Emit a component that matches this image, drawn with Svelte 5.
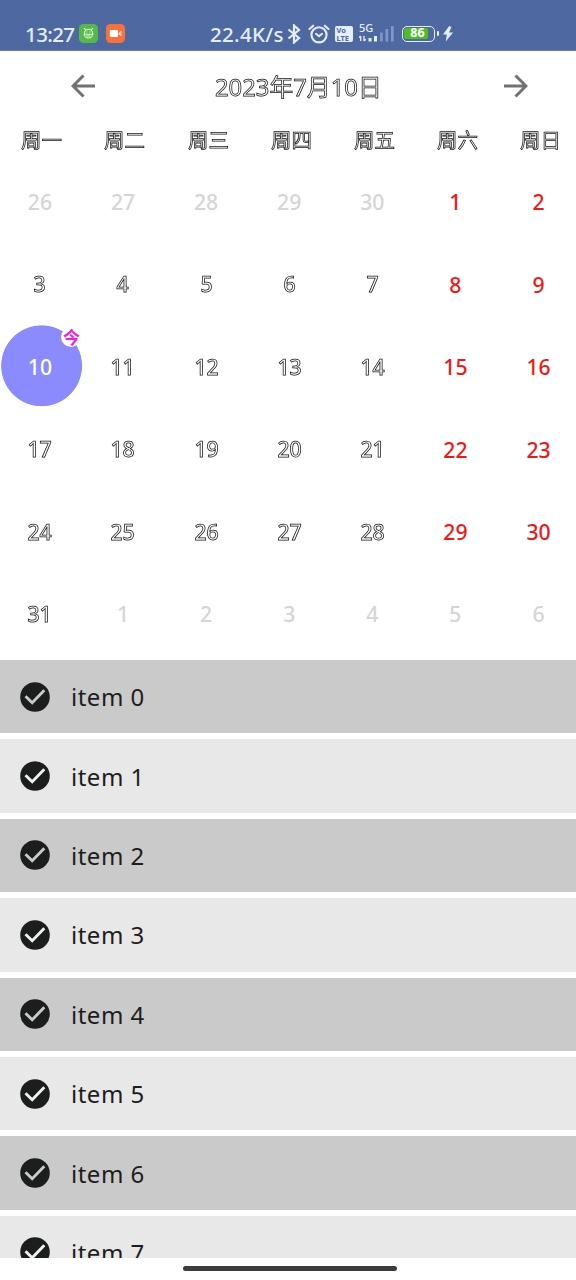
<script>
  const weekdays = ['周一', '周二', '周三', '周四', '周五', '周六', '周日'];
  const days = [];
  for (let i = 0; i < 42; i++) {
    const n = i < 5 ? 26 + i : i < 36 ? i - 4 : i - 35;
    const other = i < 5 || i > 35;
    days.push({ n, other, rest: !other && i % 7 > 4, today: i === 14 });
  }
  const items = Array.from({ length: 8 }, (_, i) => `item ${i}`);
</script>

<div class="screen">
  <header class="status">
    <span class="time">13:27</span>
    <svg class="app" width="19" height="19" viewBox="0 0 19 19">
      <rect width="19" height="19" rx="4.5" fill="#55b947" />
      <g fill="none" stroke="#e4f8df" stroke-width="1.1">
        <rect x="5.5" y="5.5" width="8" height="8.5" rx="3.6" />
        <path d="M6.5 6 5.4 4M12.5 6l1.1-2M4.5 10.3h10M7.5 8h1M10.5 8h1M7.5 12h4" />
      </g>
    </svg>
    <svg class="app cam" width="19" height="19" viewBox="0 0 19 19">
      <rect width="19" height="19" rx="4.5" fill="#f9703a" />
      <rect x="3.8" y="6" width="8.2" height="7" rx="1" fill="#fff" />
      <path d="M12.5 9 15.5 6.5v6L12.5 10.5z" fill="#ffd3c0" />
    </svg>
    <span class="speed">22.4K/s</span>
    <svg class="bt" width="14" height="20" viewBox="0 0 14 20">
      <path d="M1.5 5.5 12 14 7 18.5v-17L12 6 1.5 14.5" fill="none" stroke="#e7edfb" stroke-width="2.2" />
    </svg>
    <svg class="alarm" width="22" height="20" viewBox="0 0 22 20">
      <g fill="none" stroke="#e7edfb" stroke-width="2.1" stroke-linecap="round">
        <circle cx="11" cy="10.8" r="7.6" />
        <path d="M1.5 5 5.2 1.7M20.5 5l-3.7-3.3M8 9.8l3 2.4 3-2.4" />
      </g>
    </svg>
    <span class="volte"><b>Vo</b><b>LTE</b></span>
    <div class="signal">
      <span>5G</span>
      <svg width="36" height="19" viewBox="0 0 36 19">
        <path d="M1.7 12v5M0 13.8 1.7 12M5 12v5M6.7 15.2 5 17" stroke="#e7edfb" stroke-width="1.3" fill="none" />
        <path d="M9.5 14h3v3.5h-3zM15 12h3v5.5h-3z" fill="#e7edfb" />
        <path d="M21 8.5h2.7v9H21zM26.5 5h2.7v12.5h-2.7zM32 2h2.7v15.5H32z" fill="#8295c7" />
      </svg>
    </div>
    <span class="battery"><i>86</i></span>
    <svg class="bolt" width="10" height="16" viewBox="0 0 10 16">
      <path d="M6.2 0 0 8.4h3.8L2.8 15.5 10 6.6H6L8.5 1z" fill="#e7edfb" />
    </svg>
  </header>

  <nav class="titlebar">
    <svg width="24" height="24" viewBox="0 0 24 24"><path d="M24 12H2M12.5 1.5 2 12l10.5 10.5" /></svg>
    <h1 class="outlined">2023年7月10日</h1>
    <svg width="24" height="24" viewBox="0 0 24 24"><path d="M0 12h22M11.5 1.5 22 12 11.5 22.5" /></svg>
  </nav>

  <div class="grid week">
    {#each weekdays as d}<span class="outlined">{d}</span>{/each}
  </div>
  <div class="grid month">
    {#each days as d}
      <div class="day" class:other={d.other} class:rest={d.rest} class:today={d.today}
        class:outlined={!d.other && !d.rest && !d.today}>
        <span>{d.n}</span>
        {#if d.today}<em>今</em>{/if}
      </div>
    {/each}
  </div>

  <ul>
    {#each items as item}
      <li>
        <svg width="30" height="30" viewBox="0 0 30 30">
          <circle cx="15" cy="15" r="14.8" fill="#1c1e1e" />
          <path d="M5.5 14.2 12.2 20.8 24.3 8.3" />
        </svg>
        <span>{item}</span>
      </li>
    {/each}
  </ul>
  <footer><div></div></footer>
</div>

<style>
  :global(body) { margin: 0; }
  .screen {
    width: 576px; height: 1280px; overflow: hidden; background: #fff;
    display: flex; flex-direction: column;
    font-family: "Noto Sans", "Noto Sans CJK SC", sans-serif;
  }
  .status {
    height: 51px; box-sizing: border-box; padding: 17px 0 0 25px; flex: none;
    display: flex; align-items: center; background: #4e68a2; color: #e7edfb;
    border-bottom: 1px solid #647cb4; font-size: 20.5px; font-weight: 500; line-height: 30px;
  }
  .time { width: 54px; letter-spacing: -.6px; white-space: nowrap; }
  .cam { margin-left: 7.5px; }
  .speed { margin-left: 85.5px; width: 76px; letter-spacing: .3px; white-space: nowrap; }
  .bt { margin-left: 1px; }
  .alarm { margin-left: 7px; }
  .volte {
    width: 18px; height: 16px; margin-left: 5px; border-radius: 2px; background: #e7edfb; color: #4e68a2;
    display: flex; flex-direction: column; font-size: 7.5px; line-height: 8px; padding-left: 1.5px; box-sizing: border-box;
  }
  .signal { display: grid; margin-left: 6px; width: 36px; height: 20px; }
  .signal > * { grid-area: 1 / 1; }
  .signal span { font-size: 11px; line-height: 9px; margin-top: -1px; }
  .battery {
    position: relative; margin-left: 6.5px; width: 33.5px; height: 16px; box-sizing: border-box;
    border: 1.5px solid #e7edfb; border-radius: 5px; padding: 1.5px;
  }
  .battery::after { content: ''; position: absolute; right: -4.5px; top: 4px; width: 2px; height: 5px; background: #e7edfb; border-radius: 1px; }
  .battery i {
    display: block; width: 24px; height: 100%; border-radius: 2px; background: #50bd22; color: #fff;
    font: 700 12.5px/10.5px "Noto Sans", sans-serif; text-align: center; text-indent: 3px;
  }
  .bolt { margin-left: 7.5px; }
  .titlebar {
    height: 70px; padding: 0 48px 0 71px; flex: none;
    display: flex; align-items: center; justify-content: space-between;
  }
  .titlebar path { fill: none; stroke: #717171; stroke-width: 3; }
  h1 { margin: 1px 2px 0 0; font-size: 23.8px; font-weight: 400; line-height: 34px; }
  .outlined { color: #fff; -webkit-text-stroke: .75px #101010; will-change: transform; }
  .grid { display: grid; grid-template-columns: repeat(7, 83.1px); padding-left: .4px; flex: none; }
  .week { height: 39px; }
  .week span { font-size: 20.5px; line-height: 39px; height: 39px; text-align: center; }
  .month { grid-auto-rows: 82.45px; height: 500px; }
  .day {
    position: relative; display: flex; align-items: center; justify-content: center;
    font-size: 21.2px; font-weight: 500;
  }
  .day span { padding-right: 4px; margin-top: 2px; line-height: 30px; }
  .other { color: #d5d5d5; }
  .rest { color: #f21717; }
  .today { color: #fff; background: radial-gradient(circle at 41.6px 40.8px, #8c8bfd 40px, transparent 40.8px); }
  .today em {
    position: absolute; left: 61px; top: 2px; width: 20px; height: 20px; border-radius: 50%;
    background: #fff; color: #ee22dc; font: 700 17px/20px "Noto Sans CJK SC", sans-serif; text-align: center;
  }
  ul {
    margin: 0; padding: 0; height: 597.5px; overflow: hidden; flex: none; list-style: none;
    display: flex; flex-direction: column; gap: 6px;
  }
  li {
    height: 73.4px; flex: none; padding-left: 20px; display: flex; align-items: center; gap: 21px;
    background: #cacaca; color: #1d1d1d; font-size: 24px; letter-spacing: .5px;
  }
  li:nth-child(even) { background: #e8e8e8; }
  li path { fill: none; stroke: #cacaca; stroke-width: 2.9; }
  li:nth-child(even) path { stroke: #f0f0f0; }
  li span { margin-top: 0; }
  footer { flex: 1; padding: 8.5px 0 0 183px; }
  footer div { width: 214px; height: 5px; border-radius: 3px; background: #3c3c3c; }
</style>
